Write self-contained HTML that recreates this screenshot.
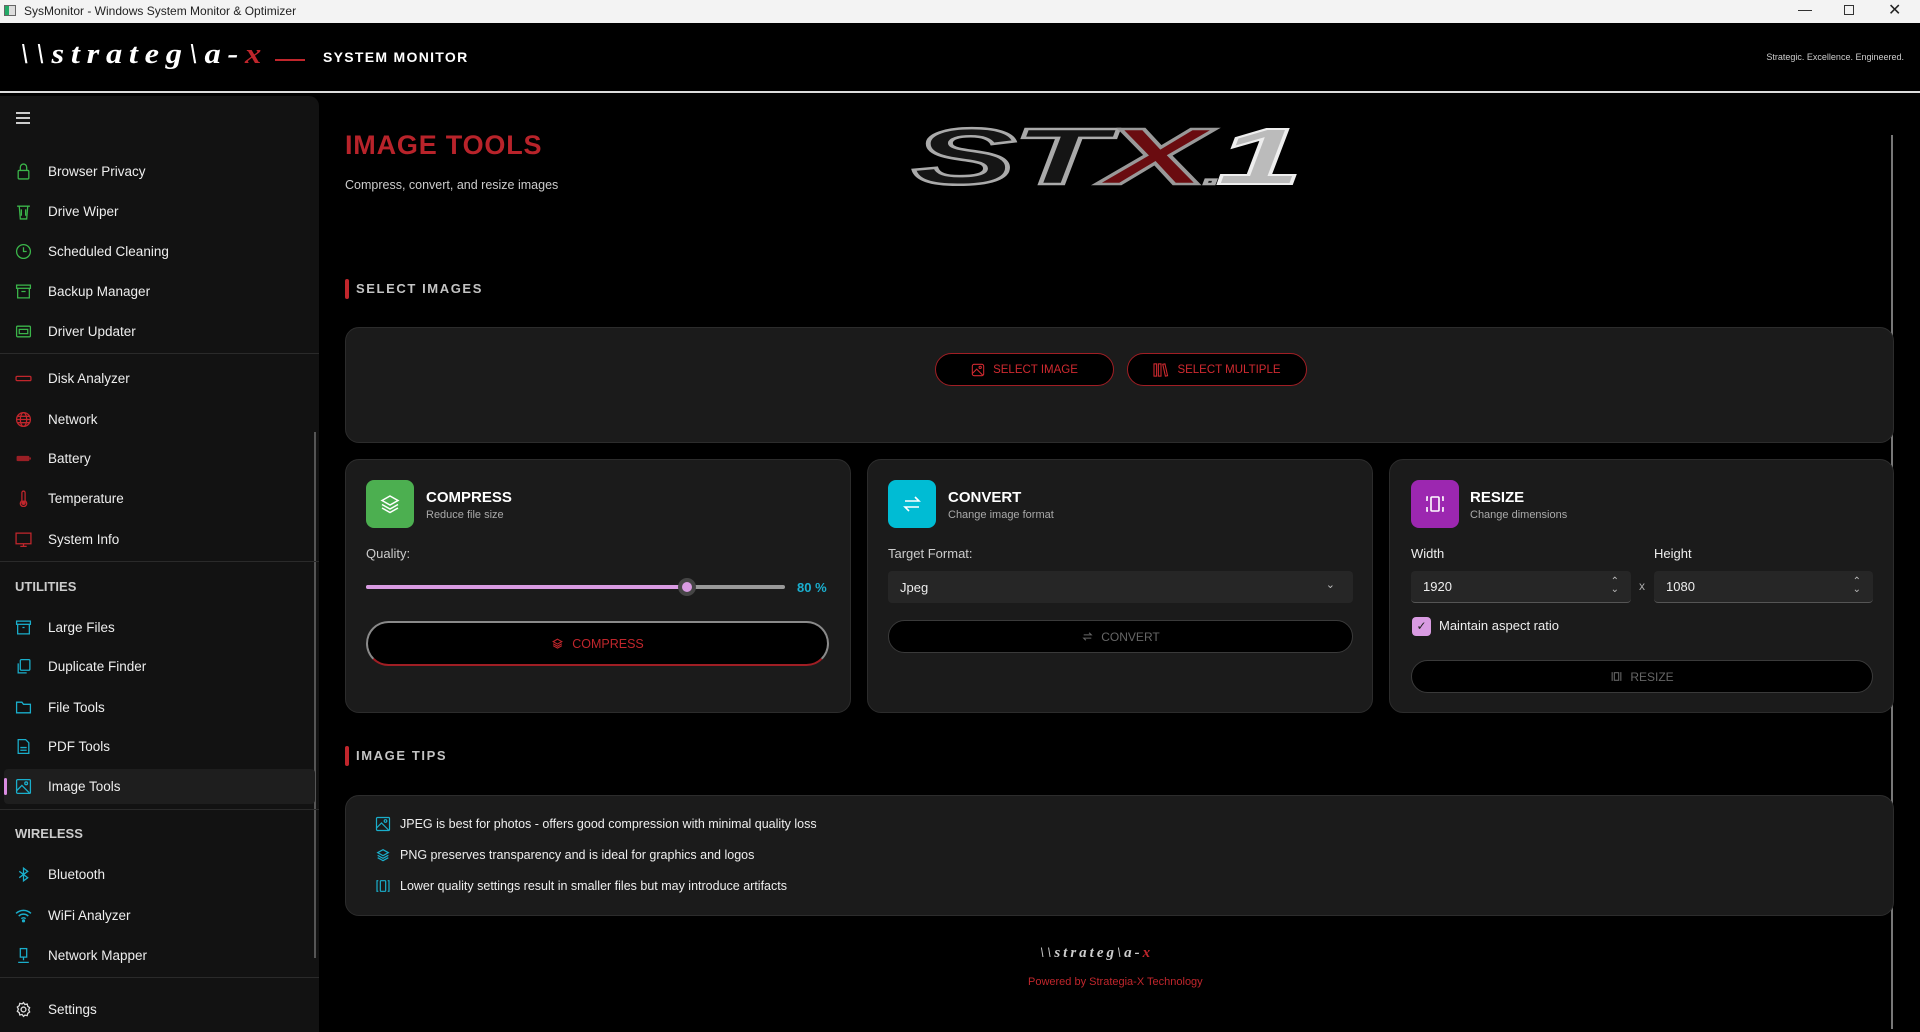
<!DOCTYPE html>
<html><head><meta charset="utf-8"><style>
*{margin:0;padding:0;box-sizing:border-box}
body{width:1920px;height:1032px;background:#000;font-family:"Liberation Sans",sans-serif;color:#fff;position:relative;overflow:hidden}
.a{position:absolute}
.tb{left:0;top:0;width:1920px;height:23px;background:#f3f3f3;color:#222;font-size:12px}
.sb{left:0;top:96px;width:319px;height:936px;background:#121212;border-top-right-radius:10px}
.it{position:absolute;left:0;width:319px;font-size:13.5px;color:#eee;display:flex;align-items:center;height:20px}
.it svg{position:absolute;left:15px;width:17px;height:17px}
.it span{position:absolute;left:48px}
.sep{position:absolute;left:0;width:319px;height:1px;background:#2a2a2a}
.grp{position:absolute;left:15px;font-size:13px;font-weight:bold;color:#ccc}
.sh{font-size:13px;letter-spacing:1.6px;color:#c4c4c4;font-weight:bold}
.bar{width:4px;height:20px;background:#c0262c;border-radius:2px}
.panel{background:#1b1b1b;border:1px solid #2c2c2c;border-radius:14px}
.ic{width:48px;height:48px;border-radius:8px;display:flex;align-items:center;justify-content:center}
.ct{font-size:15px;font-weight:bold}
.cs{font-size:11px;color:#aaa}
.lbl{font-size:13px;color:#ccc}
.inp{background:#262626;border-radius:4px;border-bottom:1px solid #555;font-size:13px;color:#eee;padding-left:12px;display:flex;align-items:center}
.btn{background:#000;border:1px solid #3a3a3a;border-radius:20px;display:flex;align-items:center;justify-content:center;font-size:12px;color:#666;gap:7px}
.rb{background:#000;border:1px solid #a01e24;border-radius:20px;display:flex;align-items:center;justify-content:center;font-size:11.5px;color:#d02a30;gap:8px}
.tip{position:absolute;left:375px;font-size:12.5px;color:#eee;display:flex;align-items:center;gap:9px}
</style></head><body>
<div class="a tb"><div class="a" style="left:4px;top:5px;width:12px;height:11px;border:1px solid #666;background:linear-gradient(90deg,#2a6 0 40%,#ddd 40%)"></div><div class="a" style="left:24px;top:4px">SysMonitor - Windows System Monitor &amp; Optimizer</div>
<div class="a" style="left:1798px;top:1px;font-size:14px">—</div><div class="a" style="left:1844px;top:5px;width:10px;height:10px;border:1px solid #333"></div><div class="a" style="left:1888px;top:0px;font-size:16px">✕</div></div>
<div class="a" style="left:20px;top:38px;font-family:'Liberation Serif',serif;font-style:italic;font-weight:bold;font-size:29px;letter-spacing:6px;color:#fff;transform:scaleX(1.12);transform-origin:left">\\strateg\a-<span style="color:#c0262c">x</span></div>
<div class="a" style="left:275px;top:59px;width:30px;height:1.5px;background:#c0262c"></div>
<div class="a" style="left:323px;top:49px;font-size:14px;font-weight:bold;letter-spacing:1.3px">SYSTEM MONITOR</div>
<div class="a" style="right:16px;top:52px;font-size:9px;color:#ccc">Strategic. Excellence. Engineered.</div>
<div class="a" style="left:0;top:91px;width:1920px;height:2px;background:#ddd"></div>

<div class="a sb"></div>
<div class="a" style="left:16px;top:112px;width:14px"><div style="height:1.5px;background:#ccc;margin-bottom:3.5px"></div><div style="height:1.5px;background:#ccc;margin-bottom:3.5px"></div><div style="height:1.5px;background:#ccc"></div></div>
<div class="a" style="left:314px;top:432px;width:2px;height:526px;background:#555"></div>

<div class="it" style="top:161px"><svg viewBox="0 0 16 16" fill="none" stroke="#3bb54a" stroke-width="1.2"><rect x="3" y="7" width="10" height="8" rx="1"/><path d="M5 7V4a3 3 0 0 1 6 0v3"/></svg><span>Browser Privacy</span></div>
<div class="it" style="top:201px"><svg viewBox="0 0 16 16" fill="none" stroke="#3bb54a" stroke-width="1.2"><path d="M2 3h12M4 3l1 12h6l1-12M6 6v6M10 6v6"/></svg><span>Drive Wiper</span></div>
<div class="it" style="top:241px"><svg viewBox="0 0 16 16" fill="none" stroke="#3bb54a" stroke-width="1.2"><circle cx="8" cy="8" r="6.5"/><path d="M8 4v4h3"/></svg><span>Scheduled Cleaning</span></div>
<div class="it" style="top:281px"><svg viewBox="0 0 16 16" fill="none" stroke="#3bb54a" stroke-width="1.2"><rect x="1.5" y="2" width="13" height="3"/><path d="M2.5 5v9h11V5M6 8h4"/></svg><span>Backup Manager</span></div>
<div class="it" style="top:321px"><svg viewBox="0 0 16 16" fill="none" stroke="#3bb54a" stroke-width="1.2"><rect x="1.5" y="3" width="13" height="10" rx="1"/><rect x="4" y="6" width="8" height="4"/></svg><span>Driver Updater</span></div>
<div class="sep" style="top:353px"></div>
<div class="it" style="top:368px"><svg viewBox="0 0 16 16" fill="none" stroke="#c0262c" stroke-width="1.2"><rect x="1" y="6" width="14" height="4" rx="1"/></svg><span>Disk Analyzer</span></div>
<div class="it" style="top:409px"><svg viewBox="0 0 16 16" fill="none" stroke="#c0262c" stroke-width="1.2"><circle cx="8" cy="8" r="6.5"/><ellipse cx="8" cy="8" rx="3" ry="6.5"/><path d="M1.5 8h13M2.5 5h11M2.5 11h11"/></svg><span>Network</span></div>
<div class="it" style="top:448px"><svg viewBox="0 0 16 16"><rect x="1.5" y="5.5" width="12" height="5" rx="1" fill="#9a1f25"/><rect x="13.5" y="7" width="1.5" height="2" fill="#9a1f25"/></svg><span>Battery</span></div>
<div class="it" style="top:488px"><svg viewBox="0 0 16 16" fill="none" stroke="#c0262c" stroke-width="1.2"><path d="M6.5 2.5a1.5 1.5 0 0 1 3 0v7.5a3 3 0 1 1-3 0z"/><circle cx="8" cy="12" r="1.5" fill="#c0262c"/></svg><span>Temperature</span></div>
<div class="it" style="top:529px"><svg viewBox="0 0 16 16" fill="none" stroke="#c0262c" stroke-width="1.2"><rect x="1" y="2" width="14" height="10"/><path d="M8 12v2M5 14.5h6"/></svg><span>System Info</span></div>
<div class="sep" style="top:561px"></div>
<div class="grp" style="top:579px">UTILITIES</div>
<div class="it" style="top:617px"><svg viewBox="0 0 16 16" fill="none" stroke="#1aaecb" stroke-width="1.2"><rect x="1.5" y="2" width="13" height="3"/><path d="M2.5 5v9h11V5M7 8h2"/></svg><span>Large Files</span></div>
<div class="it" style="top:656px"><svg viewBox="0 0 16 16" fill="none" stroke="#1aaecb" stroke-width="1.2"><rect x="5" y="1.5" width="9" height="10" rx="1"/><path d="M3 5v9h8"/></svg><span>Duplicate Finder</span></div>
<div class="it" style="top:697px"><svg viewBox="0 0 16 16" fill="none" stroke="#1aaecb" stroke-width="1.2"><path d="M1.5 3h5l1.5 2h6.5v8h-13z"/></svg><span>File Tools</span></div>
<div class="it" style="top:736px"><svg viewBox="0 0 16 16" fill="none" stroke="#1aaecb" stroke-width="1.2"><path d="M3 1.5h7l3 3v10H3z"/><path d="M5 9h6M5 11.5h6"/></svg><span>PDF Tools</span></div>
<div class="a" style="left:4px;top:769px;width:311px;height:35px;background:#1e1e1e;border-radius:4px"></div>
<div class="a" style="left:4px;top:778px;width:3px;height:17px;background:#d98be0;border-radius:2px"></div>
<div class="it" style="top:776px"><svg viewBox="0 0 16 16" fill="none" stroke="#1aaecb" stroke-width="1.2"><rect x="1.5" y="1.5" width="13" height="13" rx="1"/><circle cx="10.5" cy="5" r="1.3"/><path d="M1.5 12l5-5 7 7"/></svg><span>Image Tools</span></div>
<div class="sep" style="top:809px"></div>
<div class="grp" style="top:826px">WIRELESS</div>
<div class="it" style="top:864px"><svg viewBox="0 0 16 16" fill="none" stroke="#1aaecb" stroke-width="1.2"><path d="M4 5l8 6-4 3V2l4 3-8 6"/></svg><span>Bluetooth</span></div>
<div class="it" style="top:905px"><svg viewBox="0 0 16 16" fill="none" stroke="#1aaecb" stroke-width="1.4"><path d="M1 6a10 10 0 0 1 14 0M3.5 8.5a6.5 6.5 0 0 1 9 0M6 11a3 3 0 0 1 4 0"/><circle cx="8" cy="13" r=".8" fill="#1aaecb"/></svg><span>WiFi Analyzer</span></div>
<div class="it" style="top:945px"><svg viewBox="0 0 16 16" fill="none" stroke="#1aaecb" stroke-width="1.2"><rect x="5" y="1.5" width="6" height="8"/><path d="M8 9.5v3M3 14.5h10"/></svg><span>Network Mapper</span></div>
<div class="sep" style="top:977px"></div>
<div class="it" style="top:999px"><svg viewBox="0 0 16 16" fill="none" stroke="#ddd" stroke-width="1.2"><circle cx="8" cy="8" r="2.3"/><path d="M8 1.5l1.3 1.8 2.2-.5.5 2.2 1.8 1.3-1 2 1 2-1.8 1.3-.5 2.2-2.2-.5L8 14.5l-1.3-1.8-2.2.5-.5-2.2-1.8-1.3 1-2-1-2 1.8-1.3.5-2.2 2.2.5z"/></svg><span>Settings</span></div>

<!-- main -->
<div class="a" style="left:345px;top:130px;font-size:27px;font-weight:bold;color:#b8232a;letter-spacing:.8px">IMAGE TOOLS</div>
<div class="a" style="left:345px;top:178px;font-size:12.5px;color:#ccc">Compress, convert, and resize images</div>
<div class="a" style="left:912px;top:112px;width:240px;height:90px;font-family:'Liberation Sans',sans-serif;font-style:italic;font-weight:900;font-size:80px;letter-spacing:-2px;color:#151515;-webkit-text-stroke:2.5px #aaa;line-height:90px;transform:scaleX(1.95);transform-origin:left;white-space:nowrap">ST<span style="color:#6a0c10;-webkit-text-stroke:2.5px #999">X</span><span style="font-size:30px">.</span><span style="color:#bbb;-webkit-text-stroke:2px #eee">1</span></div>
<div class="a" style="left:1891px;top:135px;width:2px;height:894px;background:#777"></div>

<div class="a bar" style="left:345px;top:279px"></div><div class="a sh" style="left:356px;top:281px">SELECT IMAGES</div>
<div class="a panel" style="left:345px;top:327px;width:1549px;height:116px"></div>
<div class="a rb" style="left:935px;top:353px;width:179px;height:33px"><svg width="14" height="14" viewBox="0 0 16 16" fill="none" stroke="#d02a30" stroke-width="1.2"><rect x="1.5" y="1.5" width="13" height="13" rx="2"/><circle cx="10.5" cy="5" r="1.3"/><path d="M1.5 12l5-5 7 7"/></svg>SELECT IMAGE</div>
<div class="a rb" style="left:1127px;top:353px;width:180px;height:33px"><svg width="16" height="14" viewBox="0 0 18 16" fill="none" stroke="#d02a30" stroke-width="1.2"><rect x="1" y="1" width="3" height="14"/><rect x="6" y="1" width="3" height="14"/><path d="M11 1.5l2.5-.5 3 13.5-2.5.5z"/></svg>SELECT MULTIPLE</div>

<!-- compress -->
<div class="a panel" style="left:345px;top:459px;width:506px;height:254px"></div>
<div class="a ic" style="left:366px;top:480px;background:#4caf50"><svg width="24" height="24" viewBox="0 0 24 24" fill="none" stroke="#fff" stroke-width="1.5"><path d="M12 4l8 4.5-8 4.5-8-4.5z"/><path d="M4 12.5l8 4.5 8-4.5M4 16l8 4.5 8-4.5"/></svg></div>
<div class="a ct" style="left:426px;top:489px">COMPRESS</div><div class="a cs" style="left:426px;top:509px">Reduce file size</div>
<div class="a lbl" style="left:366px;top:546px">Quality:</div>
<div class="a" style="left:366px;top:585px;width:419px;height:4px;background:#999;border-radius:2px"></div>
<div class="a" style="left:366px;top:585px;width:321px;height:4px;background:#d99be2;border-radius:2px"></div>
<div class="a" style="left:678px;top:578px;width:18px;height:18px;border-radius:50%;background:#444;border:4px solid #454545"><div style="width:10px;height:10px;border-radius:50%;background:#d99be2"></div></div>
<div class="a" style="left:797px;top:580px;font-size:13px;font-weight:bold;color:#1ab0d0">80 %</div>
<div class="a rb" style="left:366px;top:621px;width:463px;height:45px;border:2px solid #8a8a8a;border-bottom-color:#a01e24;font-size:12.5px;color:#c0262c;border-radius:24px"><svg width="13" height="13" viewBox="0 0 24 24" fill="none" stroke="#c0262c" stroke-width="2"><path d="M12 4l8 4.5-8 4.5-8-4.5z"/><path d="M4 12.5l8 4.5 8-4.5M4 16l8 4.5 8-4.5"/></svg>COMPRESS</div>

<!-- convert -->
<div class="a panel" style="left:867px;top:459px;width:506px;height:254px"></div>
<div class="a ic" style="left:888px;top:480px;background:#00bcd4"><svg width="24" height="24" viewBox="0 0 24 24" fill="none" stroke="#fff" stroke-width="1.6"><path d="M5 9h14l-4-4M19 15H5l4 4"/></svg></div>
<div class="a ct" style="left:948px;top:489px">CONVERT</div><div class="a cs" style="left:948px;top:509px">Change image format</div>
<div class="a lbl" style="left:888px;top:546px">Target Format:</div>
<div class="a inp" style="left:888px;top:571px;width:465px;height:32px;border-bottom:none">Jpeg<span style="position:absolute;right:18px;top:7px;font-size:11px;color:#bbb">⌄</span></div>
<div class="a btn" style="left:888px;top:620px;width:465px;height:33px"><svg width="13" height="13" viewBox="0 0 24 24" fill="none" stroke="#666" stroke-width="2"><path d="M5 9h14l-4-4M19 15H5l4 4"/></svg>CONVERT</div>

<!-- resize -->
<div class="a panel" style="left:1389px;top:459px;width:505px;height:254px"></div>
<div class="a ic" style="left:1411px;top:480px;background:#9c27b0"><svg width="24" height="24" viewBox="0 0 24 24" fill="none" stroke="#fff" stroke-width="1.6"><rect x="8" y="5" width="8" height="14" rx="1"/><path d="M5 5H4v4M4 15v4h1M19 5h1v4M20 15v4h-1"/></svg></div>
<div class="a ct" style="left:1470px;top:489px">RESIZE</div><div class="a cs" style="left:1470px;top:509px">Change dimensions</div>
<div class="a lbl" style="left:1411px;top:546px;color:#eee">Width</div><div class="a lbl" style="left:1654px;top:546px;color:#eee">Height</div>
<div class="a inp" style="left:1411px;top:571px;width:220px;height:32px">1920<span style="position:absolute;right:12px;top:7px;font-size:10px;color:#bbb;line-height:8px">⌃<br>⌄</span></div>
<div class="a" style="left:1639px;top:579px;font-size:12px;color:#aaa">x</div>
<div class="a inp" style="left:1654px;top:571px;width:219px;height:32px">1080<span style="position:absolute;right:12px;top:7px;font-size:10px;color:#bbb;line-height:8px">⌃<br>⌄</span></div>
<div class="a" style="left:1412px;top:617px;width:19px;height:19px;border-radius:4px;background:#d99be2;color:#222;font-size:12px;text-align:center;line-height:19px">✓</div>
<div class="a" style="left:1439px;top:618px;font-size:13px;color:#eee">Maintain aspect ratio</div>
<div class="a btn" style="left:1411px;top:660px;width:462px;height:33px"><svg width="13" height="13" viewBox="0 0 24 24" fill="none" stroke="#666" stroke-width="2"><rect x="8" y="5" width="8" height="14"/><path d="M5 5H4v14h1M19 5h1v14h-1"/></svg>RESIZE</div>

<!-- tips -->
<div class="a bar" style="left:345px;top:746px"></div><div class="a sh" style="left:356px;top:748px">IMAGE TIPS</div>
<div class="a panel" style="left:345px;top:795px;width:1549px;height:121px"></div>
<div class="tip" style="top:816px"><svg width="16" height="16" viewBox="0 0 16 16" fill="none" stroke="#1aaecb" stroke-width="1.2"><rect x="1.5" y="1.5" width="13" height="13" rx="1"/><circle cx="10.5" cy="5" r="1.3"/><path d="M1.5 12l5-5 7 7"/></svg>JPEG is best for photos - offers good compression with minimal quality loss</div>
<div class="tip" style="top:847px"><svg width="16" height="16" viewBox="0 0 24 24" fill="none" stroke="#1aaecb" stroke-width="1.8"><path d="M12 4l8 4.5-8 4.5-8-4.5z"/><path d="M4 12.5l8 4.5 8-4.5M4 16l8 4.5 8-4.5"/></svg>PNG preserves transparency and is ideal for graphics and logos</div>
<div class="tip" style="top:878px"><svg width="16" height="16" viewBox="0 0 24 24" fill="none" stroke="#1aaecb" stroke-width="1.8"><rect x="8" y="4" width="8" height="16" rx="1"/><path d="M5 4H3v16h2M19 4h2v16h-2"/></svg>Lower quality settings result in smaller files but may introduce artifacts</div>

<div class="a" style="left:1040px;top:945px;font-family:'Liberation Serif',serif;font-style:italic;font-weight:bold;font-size:15px;letter-spacing:3px;color:#ccc">\\strateg\a-<span style="color:#c0262c">x</span></div>
<div class="a" style="left:1028px;top:976px;font-size:11px;color:#c0262c">Powered by Strategia-X Technology</div>
</body></html>
